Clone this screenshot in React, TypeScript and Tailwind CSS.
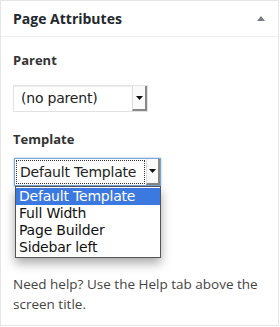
import React from "react";

const options = ["Default Template", "Full Width", "Page Builder", "Sidebar left"];

function Arrow() {
  return (
    <svg width="7" height="4" viewBox="0 0 7 4" className="block">
      <path d="M0 0h7L3.5 4z" fill="#111" />
    </svg>
  );
}

export default function App() {
  return (
    <div className="w-[279px] h-[326px] bg-white border border-[#e5e5e5] font-['Open_Sans',sans-serif] text-[#444] relative">
      <div className="h-[36px] border-b border-[#eeeeee] flex items-center justify-between pl-[12px] pr-[13px]">
        <h2 className="text-[14px] font-bold text-[#23282d] leading-none">Page Attributes</h2>
        <svg width="8" height="5" viewBox="0 0 8 5">
          <path d="M0 5L4 0l4 5z" fill="#787c82" />
        </svg>
      </div>

      <div className="px-[12px] pt-[14px]">
        <p className="text-[13px] font-bold leading-[18px] text-[#333]">Parent</p>
        <div className="mt-[16px] w-[135px] h-[27px] flex border border-[#e2e2e2] bg-white shadow-[inset_0_1px_1px_rgba(0,0,0,0.07)]">
          <span className="flex-1 pl-[7px] flex items-center text-[14px] text-[#222] font-['DejaVu_Sans',sans-serif] tracking-[-0.2px]">
            (no parent)
          </span>
          <span className="w-[15px] flex items-center justify-center border-l border-[#ddd] border-r-2 border-b-2 border-r-[#888] border-b-[#888] bg-[#fafafa]">
            <Arrow />
          </span>
        </div>

        <p className="mt-[18px] text-[13px] font-bold leading-[18px] text-[#333]">Template</p>
        <div className="relative mt-[10px] ml-[1px] w-[147px]">
          <div className="h-[28px] flex border border-[#7aa7d8] bg-white shadow-[0_0_2px_#8ab6e2]">
            <span className="flex-1 m-[2px] outline-1 outline-dotted outline-[#333] flex items-center pl-[3px] text-[14px] text-[#222] font-['DejaVu_Sans',sans-serif] tracking-[-0.2px]">
              Default Template
            </span>
            <span className="w-[14px] flex items-center justify-center border-l border-[#ddd] border-r-2 border-b-2 border-r-[#888] border-b-[#888] bg-[#fafafa]">
              <Arrow />
            </span>
          </div>
          <ul className="absolute left-[1px] top-[28px] w-[146px] bg-white border border-[#555] shadow-[0_5px_10px_rgba(0,0,0,0.35)] py-[1px] font-['DejaVu_Sans',sans-serif] text-[14px] tracking-[-0.2px] text-[#111]">
            {options.map((o, i) => (
              <li
                key={o}
                className={
                  i === 0
                    ? "h-[17px] leading-[17px] px-[3px] bg-[#3b78e0] text-white"
                    : "h-[17px] leading-[17px] px-[3px]"
                }
              >
                {o}
              </li>
            ))}
          </ul>
        </div>

        <p className="mt-[88px] text-[13.5px] leading-[20px] text-[#444]">
          Need help? Use the Help tab above the screen title.
        </p>
      </div>
    </div>
  );
}
